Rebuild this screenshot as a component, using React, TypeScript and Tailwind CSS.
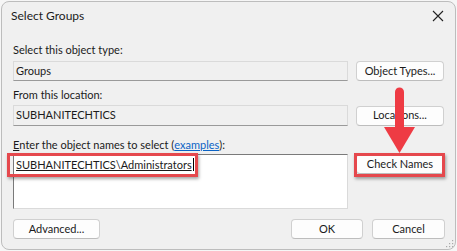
import React from "react";

const font = { fontFamily: 'Lato, "Liberation Sans", sans-serif' };

function Btn({ children, className = "" }: { children: React.ReactNode; className?: string }) {
  return (
    <div
      className={
        "h-[20px] flex items-center justify-center rounded-[4px] border border-[#d0d0d0] border-b-[#bdbdbd] bg-[#fdfdfd] text-[11px] text-[#1b1b1b] " +
        className
      }
    >
      {children}
    </div>
  );
}

export default function App() {
  return (
    <div className="relative w-[457px] h-[251px] bg-[#f6f6f6] overflow-hidden" style={font}>
      <div className="absolute left-[1px] top-[1px] w-[455px] h-[249px] rounded-[8px] border border-[#bdbdbd] bg-[#f0f0f0] flex flex-col">
        {/* title bar */}
        <div className="h-[28px] flex items-center justify-between pl-[9px] pr-[8px]">
          <span className="text-[12px] text-[#1b1b1b]">Select Groups</span>
          <svg width="12" height="12" viewBox="0 0 12 12" className="mr-[3px]">
            <path d="M1 1 L11 11 M11 1 L1 11" stroke="#222" strokeWidth="1.1" />
          </svg>
        </div>
        <div className="flex flex-col pl-[11px] pr-[10px]">
          <div className="mt-[12px] h-[16px] flex items-center text-[11px] text-[#1b1b1b]">Select this object type:</div>
          <div className="mt-[3px] flex items-center gap-[8px]">
            <div className="w-[335px] h-[20px] border border-[#dadada] border-b-[#9a9a9a] bg-[#f0f0f0] flex items-center pl-[2px] text-[11px] text-[#1b1b1b]">
              Groups
            </div>
            <Btn className="w-[88px]">Object Types...</Btn>
          </div>
          <div className="mt-[6px] h-[16px] flex items-center text-[11px] text-[#1b1b1b]">From this location:</div>
          <div className="mt-[2px] flex items-center gap-[8px]">
            <div className="w-[335px] h-[21px] border border-[#dadada] border-b-[#9a9a9a] bg-[#f0f0f0] flex items-center pl-[2px] text-[11px] text-[#1b1b1b]">
              SUBHANITECHTICS
            </div>
            <Btn className="w-[88px]">Locations...</Btn>
          </div>
          <div className="mt-[11px] h-[16px] flex items-center text-[11px] text-[#1b1b1b] whitespace-pre">
            <span className="underline">E</span>nter the object names to select (
            <span className="text-[#0b63c5] underline">examples</span>):
          </div>
          <div className="mt-[1px] flex items-start gap-[8px]">
            <div className="w-[335px] h-[55px] border border-[#7a7a7a] border-r-[#dadada] border-b-[#dadada] bg-white pl-[2px] pt-[2px] text-[11px] text-[#1b1b1b]">
              <span className="underline border-r border-black pr-[1px]">SUBHANITECHTICS\Administrators</span>
            </div>
            <Btn className="w-[88px]">Check Names</Btn>
          </div>
          <div className="mt-[10px] flex items-center">
            <Btn className="w-[87px]">Advanced...</Btn>
            <div className="flex-1" />
            <Btn className="w-[72px] border-[#0067c0] border-b-[#0067c0]">OK</Btn>
            <Btn className="w-[73px] ml-[9px]">Cancel</Btn>
          </div>
        </div>
        {/* resize grip */}
        <svg width="8" height="8" viewBox="0 0 8 8" className="absolute right-[1px] bottom-[1px]">
          <rect x="6" y="0" width="1.2" height="1.2" fill="#aaa" />
          <rect x="3" y="3" width="1.2" height="1.2" fill="#aaa" />
          <rect x="6" y="3" width="1.2" height="1.2" fill="#aaa" />
          <rect x="0" y="6" width="1.2" height="1.2" fill="#aaa" />
          <rect x="3" y="6" width="1.2" height="1.2" fill="#aaa" />
          <rect x="6" y="6" width="1.2" height="1.2" fill="#aaa" />
        </svg>
      </div>
      {/* red highlight boxes */}
      <div className="absolute left-[7px] top-[153px] w-[191px] h-[24px] border-[3px] border-[#e5484d] shadow-[1px_2px_3px_rgba(0,0,0,0.35)]" />
      <div className="absolute left-[354px] top-[153px] w-[91px] h-[24px] border-[3px] border-[#e5484d] shadow-[1px_2px_3px_rgba(0,0,0,0.35)]" />
      {/* red arrow */}
      <svg width="32" height="68" viewBox="0 0 32 68" className="absolute left-[384px] top-[86px]">
        <line x1="15.5" y1="6" x2="15.5" y2="44" stroke="#ee3b44" strokeWidth="9" strokeLinecap="round" />
        <polygon points="0,41 31,41 15.5,67" fill="#ee3b44" />
      </svg>
    </div>
  );
}
